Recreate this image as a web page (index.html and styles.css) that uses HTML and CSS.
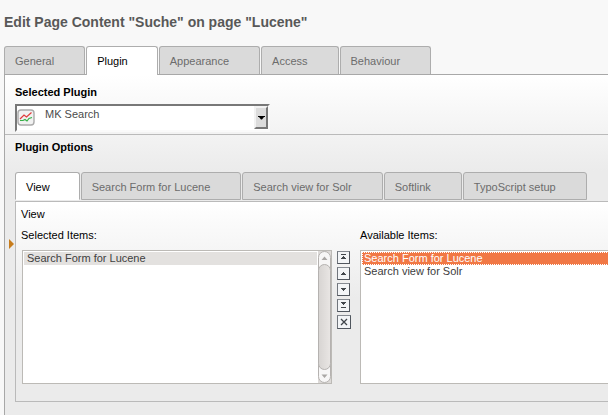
FILE: index.html
```html
<!DOCTYPE html>
<html lang="en">
<head>
<meta charset="utf-8">
<title>Edit Page Content</title>
<link rel="stylesheet" href="styles.css">
</head>
<body>
<main class="page">
  <h1 class="title">Edit Page Content "Suche" on page "Lucene"</h1>

  <nav class="tabs">
    <button class="tab" type="button">General</button>
    <button class="tab active" type="button">Plugin</button>
    <button class="tab" type="button">Appearance</button>
    <button class="tab" type="button">Access</button>
    <button class="tab" type="button">Behaviour</button>
  </nav>

  <div class="panel">
    <section class="plugin">
      <label class="heading" for="plugin">Selected Plugin</label>
      <div class="picker">
        <select id="plugin" class="picker-select"><option>MK Search</option></select>
        <svg class="picker-icon" viewBox="0 0 18 18" aria-hidden="true">
          <rect x="1" y="1" width="16" height="15" rx="3" fill="#f1f1f1" stroke="#aaa" stroke-width="1.4"/>
          <path d="M3 11.500H6L8 10.500L10 12L12 9.500L15 8.500" fill="none" stroke="#35b047" stroke-width="1.2"/>
          <path d="M3 10L7 6L9.500 8L14.500 3.500" fill="none" stroke="#e03c3c" stroke-width="1.2"/>
        </svg>
        <span class="picker-arrow"><svg viewBox="0 0 7 4" aria-hidden="true"><path d="M0 0H7V1H6L4 3.500H3L1 1H0Z"/></svg></span>
      </div>
    </section>

    <section class="options">
      <h2 class="heading">Plugin Options</h2>
      <nav class="tabs inner-tabs">
        <button class="tab active" type="button">View</button>
        <button class="tab" type="button">Search Form for Lucene</button>
        <button class="tab" type="button">Search view for Solr</button>
        <button class="tab" type="button">Softlink</button>
        <button class="tab" type="button">TypoScript setup</button>
      </nav>
      <div class="view">
        <svg class="marker" viewBox="0 0 5 10" aria-hidden="true"><path d="M0 0L5 5L0 10Z" fill="#c77c1c"/></svg>
        <h3 class="view-title">View</h3>
        <div class="chooser">
          <div class="column selected-items">
            <label for="selected">Selected Items:</label>
            <div class="listbox">
              <select id="selected" class="list" size="10" multiple><option selected>Search Form for Lucene</option></select>
              <svg class="scroll" viewBox="0 0 13 132" aria-hidden="true">
                <defs><linearGradient id="thumb"><stop offset="0" stop-color="#d7d4d2"/><stop offset="1" stop-color="#e9e6e4"/></linearGradient></defs>
                <rect width="13" height="132" fill="#dddad8"/>
                <rect x=".5" y=".5" width="12" height="131" rx="6" fill="#f7f6f6" stroke="#b5b2b0"/>
                <rect x=".5" y="13.500" width="12" height="105" rx="6" fill="url(#thumb)" stroke="#b5b2b0"/>
                <path d="M3.500 9L6.500 5.500L9.500 9ZM3.500 123.500L6.500 127L9.500 123.500Z" fill="#aaa7a5"/>
              </svg>
            </div>
          </div>
          <div class="moves">
            <button class="move" type="button" aria-label="Move to top"><svg viewBox="-1 -1 11 11"><path d="M2 1H7V2H2ZM4 3H5V4H6V5H7V6H2V5H3V4H4Z"/></svg></button>
            <button class="move" type="button" aria-label="Move up"><svg viewBox="-1 -1 11 11"><path d="M4 3H5V4H6V5H7V6H2V5H3V4H4Z"/></svg></button>
            <button class="move" type="button" aria-label="Move down"><svg viewBox="-1 -1 11 11"><path d="M2 3H7V4H6V5H5V6H4V5H3V4H2Z"/></svg></button>
            <button class="move" type="button" aria-label="Move to bottom"><svg viewBox="-1 -1 11 11"><path d="M2 1H7V2H6V3H5V4H4V3H3V2H2ZM2 6H7V7H2Z"/></svg></button>
            <button class="move remove" type="button" aria-label="Remove"><svg viewBox="0 0 12 12"><path d="M3 3L9 9M9 3L3 9" fill="none" stroke="#41464b" stroke-width="1.3"/></svg></button>
          </div>
          <div class="column available-items">
            <label for="available">Available Items:</label>
            <div class="listbox">
              <select id="available" class="list" size="10"><option selected>Search Form for Lucene</option><option>Search view for Solr</option></select>
            </div>
          </div>
        </div>
      </div>
    </section>
  </div>
</main>
</body>
</html>
```
FILE: styles.css
```css
* {
  box-sizing: border-box;
}

body {
  margin: 0;
  min-height: 100vh;
  display: flex;
  overflow: hidden;
  background: #f8f8f8;
  color: #000;
  font: 11px/13px "Liberation Sans", Arial, sans-serif;
}

/* The form runs past the right edge of the window. */
.page {
  flex: 1;
  display: flex;
  flex-direction: column;
  margin: 0 -24px 0 4px;
}

.title {
  margin: 14px 0 16px;
  color: #585858;
  font-size: 14px;
  line-height: 16px;
}

.tabs {
  display: flex;
  gap: 1px;
}

.tab {
  height: 28px;
  padding: 2px 30px 0 10px;
  border: 1px solid #adadad;
  border-bottom: 0;
  border-radius: 3px 3px 0 0;
  background: #dadada;
  color: #6c6c6c;
  font: inherit;
  text-align: left;
}

.tab.active {
  position: relative;
  margin-bottom: -1px;
  height: 29px;
  padding: 1px 29px 0 10px;
  background: #fff;
  color: #000;
}

.panel {
  flex: 1;
  border: 1px solid #a8a8a8;
  border-bottom: 0;
  background: #ebebeb linear-gradient(#fff, #ebebeb) 0 0 / 100% 96px no-repeat;
}

.heading {
  display: block;
  margin: 0;
  font-size: 11px;
  font-weight: bold;
  line-height: 13px;
}

.plugin {
  padding: 11px 10px 2px;
  border-bottom: 1px solid #bababa;
}

.picker {
  position: relative;
  width: 255px;
  margin-top: 5px;
}

.picker-select {
  appearance: none;
  display: block;
  width: 100%;
  height: 28px;
  padding: 0 18px 8px 28px;
  border: 2px solid;
  border-color: #787878 #fafafa #fafafa #787878;
  border-radius: 0;
  background: #fff;
  color: #4b4b4b;
  font: inherit;
}

.picker-icon {
  position: absolute;
  left: 2px;
  top: 5px;
  width: 18px;
  height: 18px;
}

.picker-arrow {
  position: absolute;
  top: 2px;
  right: 2px;
  width: 14px;
  height: 23px;
  display: flex;
  align-items: center;
  justify-content: center;
  border: 2px solid;
  border-color: #f2f2f2 #777 #777 #f2f2f2;
  background: #dcdcdc;
  pointer-events: none;
}

.picker-arrow svg {
  width: 7px;
  height: 4px;
}

.options {
  padding: 6px 10px 13px;
}

.inner-tabs {
  margin-top: 18px;
}

.inner-tabs .tab {
  height: 28px;
  margin-bottom: 1px;
  padding-top: 2px;
  border-bottom: 1px solid #adadad;
}

.inner-tabs .tab.active {
  border-bottom-color: #fff;
}

.view {
  position: relative;
  padding: 6px 5px 17px;
  border: 1px solid #bababa;
  background: #ebebeb linear-gradient(#fff, #ebebeb) 0 0 / 100% 96px no-repeat;
}

.marker {
  position: absolute;
  left: -7px;
  top: 37px;
  width: 5px;
  height: 10px;
}

.view-title {
  margin: 0 0 8px;
  font-size: 11px;
  font-weight: normal;
}

.chooser {
  display: flex;
}

.column {
  display: flex;
  flex-direction: column;
  gap: 8px;
}

.selected-items {
  flex: none;
  width: 311px;
}

.selected-items .listbox {
  margin-left: 1px;
}

.available-items {
  flex: 1;
}

.listbox {
  display: flex;
  height: 134px;
  border: 1px solid #bcbab6;
  background: #fff;
}

.list {
  flex: 1;
  min-width: 0;
  height: 100%;
  padding: 1px;
  border: 0;
  border-radius: 0;
  outline: 0;
  overflow: hidden;
  background: #fff;
  color: #404040;
  font: inherit;
}

.list option {
  height: 13px;
  min-height: 13px;
  padding: 0 2px;
  line-height: 13px;
}

#selected option {
  padding: 0 3px;
}

#selected option:checked {
  background: #e3e1df linear-gradient(#e3e1df, #e3e1df);
  color: #404040;
}

#available option:checked {
  background: #f17845 linear-gradient(#f17845, #f17845);
  color: #fff;
  outline: 1px dotted #fff;
  outline-offset: -1px;
}

.scroll {
  flex: none;
  width: 13px;
  height: 132px;
}

.moves {
  display: flex;
  flex-direction: column;
  gap: 3px;
  margin: 22px 9px 0 5px;
}

.move {
  display: block;
  width: 13px;
  height: 13px;
  padding: 0;
  border: 1px solid;
  border-color: #858a91 #50565e #50565e #70757c;
  background: #f3f5f7;
}

.move svg {
  display: block;
  width: 11px;
  height: 11px;
  fill: #41464b;
}

.remove {
  width: 14px;
  height: 14px;
}

.remove svg {
  width: 12px;
  height: 12px;
}
```
